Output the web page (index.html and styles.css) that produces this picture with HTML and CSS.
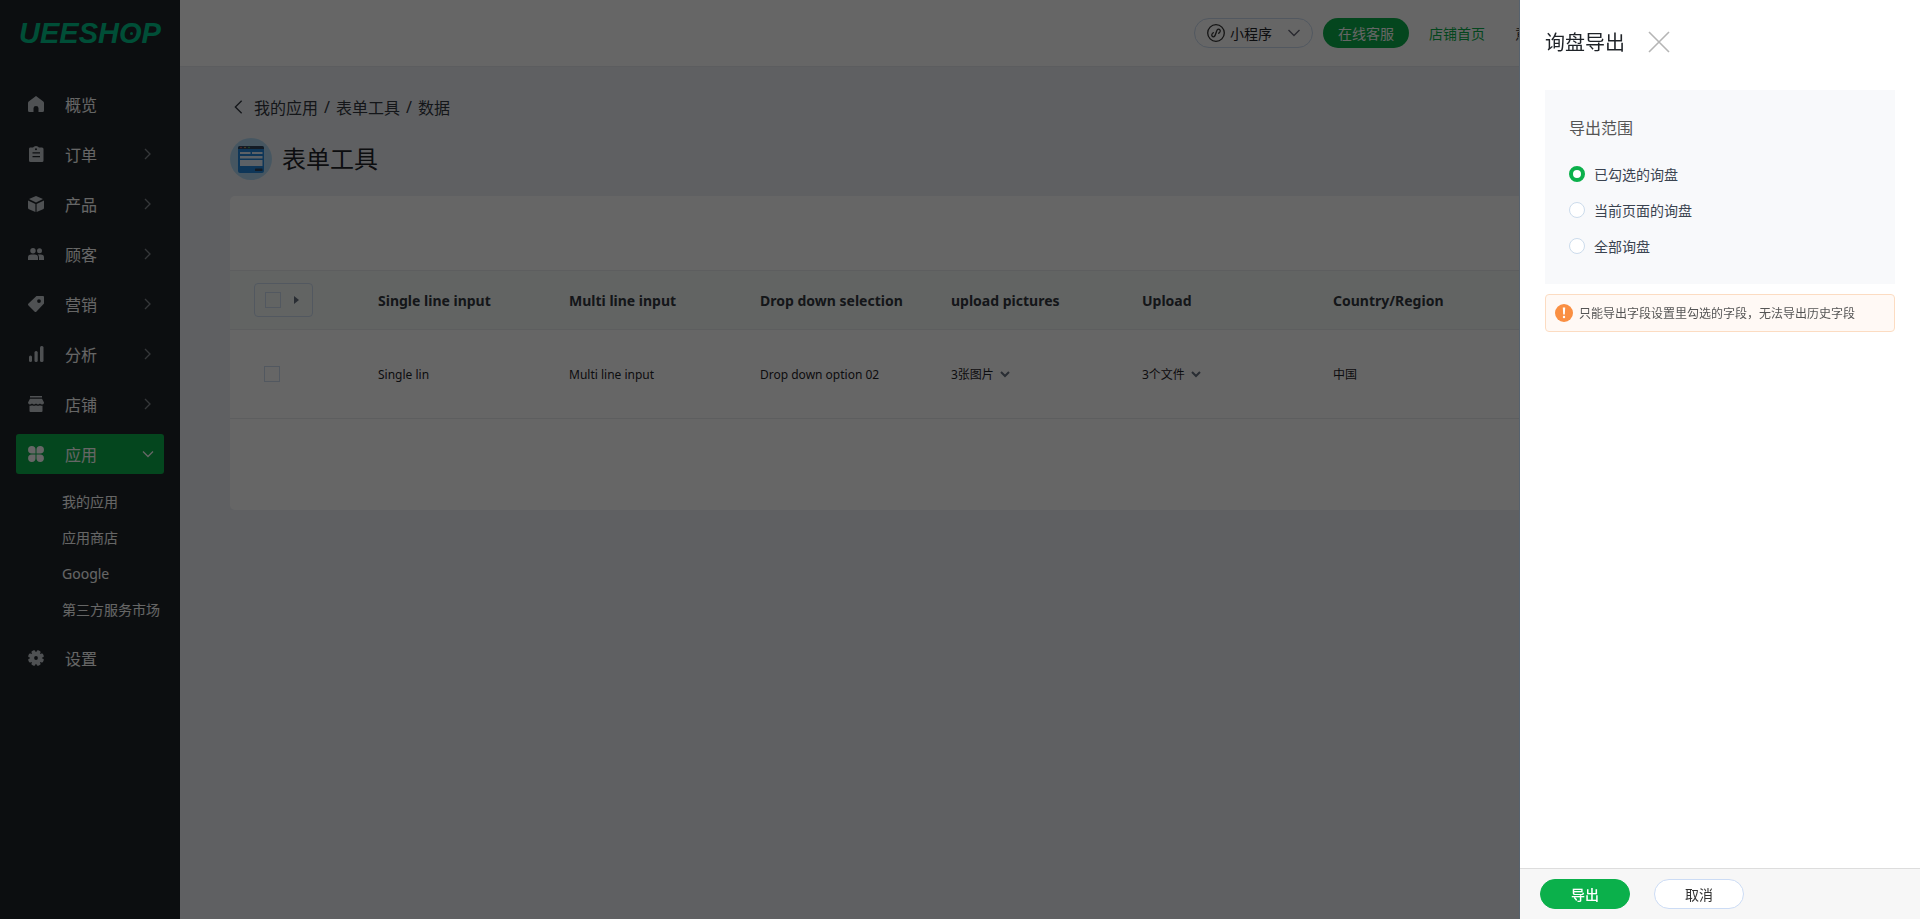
FILE: index.html
```html
<!DOCTYPE html>
<html lang="zh-CN">
<head>
  <meta charset="UTF-8">
  <meta name="viewport" content="width=device-width, initial-scale=1.0">
  <title>表单工具</title>
  <link rel="stylesheet" href="styles.css">
</head>
<body>
  <div class="page">
    <!-- Sidebar -->
    <aside class="sidebar">
      <div class="logo">UEESH<span class="logo-o">O</span>P</div>
      <nav class="menu">
        <a href="#" class="menu-item">
          <svg class="icon" viewBox="0 0 16 16"><path d="M8 0 15 5.2Q16 6 16 7V14.5Q16 16 14.5 16H10.5V12.2Q10.5 10 8 10T5.5 12.2V16H1.500Q0 16 0 14.500V7Q0 6 1 5.200Z"/></svg>
          <span>概览</span>
        </a>
        <a href="#" class="menu-item">
          <svg class="icon" viewBox="0 0 16 16"><path fill-rule="evenodd" d="M2 1.500H5Q6 0 8 0T11 1.500H14Q15.500 1.500 15.500 3V14.500Q15.500 16 14 16H2.500Q1 16 1 14.500V3Q1 1.500 2 1.500ZM8 2.200A1 1 0 1 0 8 4.200 1 1 0 0 0 8 2.200ZM4.500 6.300V7.500H12V6.300ZM4.500 10V11.200H12V10Z"/></svg>
          <span>订单</span>
          <svg class="arrow" viewBox="0 0 12 12"><path d="M3 1 8 6 3 11"/></svg>
        </a>
        <a href="#" class="menu-item">
          <svg class="icon" viewBox="0 0 16 16"><path d="M8 0 15 3 8 6.500 1 3ZM0 4.500 7.400 8V16L1 13.200Q0 12.700 0 11.700ZM16 4.500 8.600 8V16L15 13.200Q16 12.700 16 11.700Z"/></svg>
          <span>产品</span>
          <svg class="arrow" viewBox="0 0 12 12"><path d="M3 1 8 6 3 11"/></svg>
        </a>
        <a href="#" class="menu-item">
          <svg class="icon" viewBox="0 0 16 16"><circle cx="5" cy="4.800" r="2.700"/><circle cx="11.500" cy="4.800" r="2.500"/><path d="M0 14V11.500Q0 8.500 3 8.500H7Q10 8.500 10 11.500V14ZM11 14V11.500Q11 9.600 9.800 8.500H13Q16 8.500 16 11.500V14Z"/></svg>
          <span>顾客</span>
          <svg class="arrow" viewBox="0 0 12 12"><path d="M3 1 8 6 3 11"/></svg>
        </a>
        <a href="#" class="menu-item">
          <svg class="icon" viewBox="0 0 16 16"><path fill-rule="evenodd" d="M8.500 0H15Q16 0 16 1V7.500L8.500 15.500Q7.500 16.500 6.500 15.500L.5 9.500Q-.5 8.500 .5 7.500ZM11 3.200A1.900 1.900 0 1 0 11 7 1.900 1.900 0 0 0 11 3.200Z"/></svg>
          <span>营销</span>
          <svg class="arrow" viewBox="0 0 12 12"><path d="M3 1 8 6 3 11"/></svg>
        </a>
        <a href="#" class="menu-item">
          <svg class="icon" viewBox="0 0 16 16"><rect x="1" y="9.500" width="3" height="6.500" rx="1.500"/><rect x="6.500" y="5" width="3.200" height="11" rx="1.500"/><rect x="12" y="0" width="3.500" height="16" rx="1.500"/></svg>
          <span>分析</span>
          <svg class="arrow" viewBox="0 0 12 12"><path d="M3 1 8 6 3 11"/></svg>
        </a>
        <a href="#" class="menu-item">
          <svg class="icon" viewBox="0 0 16 16"><path d="M2 0H14V1.500H2ZM2 2.800H14L16 6.500Q16 8.500 14.300 8.500T12 7.500Q11 8.500 10 8.500T8 7.500Q7 8.500 6 8.500T4 7.500Q3 8.500 1.700 8.500T0 6.500ZM1.500 9.800Q3 10 4 9.200 6 10.500 8 9.200 10 10.500 12 9.200 13 10 14.500 9.800V15Q14.500 16 13.500 16H2.500Q1.500 16 1.500 15Z"/></svg>
          <span>店铺</span>
          <svg class="arrow" viewBox="0 0 12 12"><path d="M3 1 8 6 3 11"/></svg>
        </a>
        <a href="#" class="menu-item active">
          <svg class="icon" viewBox="0 0 16 16"><path d="M3.800 0A3.700 3.700 0 0 1 7.500 3.700V7.500H3.800A3.700 3.700 0 0 1 3.800 0ZM12.200 0A3.700 3.700 0 0 1 12.200 7.500H8.500V3.700A3.700 3.700 0 0 1 12.200 0ZM3.800 8.500H7.500V12.200A3.700 3.700 0 1 1 3.800 8.500ZM8.500 8.500H12.200A3.700 3.700 0 1 1 8.500 12.200Z"/></svg>
          <span>应用</span>
          <svg class="arrow" viewBox="0 0 12 12"><path d="M1 3.500 6 8.500 11 3.500"/></svg>
        </a>
        <div class="submenu">
          <a href="#">我的应用</a>
          <a href="#">应用商店</a>
          <a href="#">Google</a>
          <a href="#">第三方服务市场</a>
        </div>
        <a href="#" class="menu-item">
          <svg class="icon" viewBox="0 0 16 16">
            <circle cx="8" cy="8" r="6"/>
            <rect x="6" y="0" width="4" height="16" rx="1.200" transform="rotate(22.500 8 8)"/>
            <rect x="6" y="0" width="4" height="16" rx="1.200" transform="rotate(67.500 8 8)"/>
            <rect x="6" y="0" width="4" height="16" rx="1.200" transform="rotate(112.500 8 8)"/>
            <rect x="6" y="0" width="4" height="16" rx="1.200" transform="rotate(157.500 8 8)"/>
            <circle cx="8" cy="8" r="1.900" fill="#20252a"/>
          </svg>
          <span>设置</span>
        </a>
      </nav>
    </aside>

    <div class="main">
      <!-- Top bar -->
      <header class="topbar">
        <div class="channel">
          <svg class="channel-icon" viewBox="0 0 18 18"><circle cx="9" cy="9" r="8.300"/><path d="M7 8.700C4.500 8.700 3.800 12.800 6.500 12.800 9.500 12.800 8.500 5.200 11.500 5.200 14.200 5.200 13.500 9.300 11 9.300"/></svg>
          <select id="channel" aria-label="渠道">
            <option>小程序</option>
          </select>
          <svg class="channel-arrow" viewBox="0 0 12 12"><path d="M.5 3 6 8.500 11.500 3"/></svg>
        </div>
        <button type="button" class="service">在线客服</button>
        <a href="#" class="shop-link">店铺首页</a>
        <a href="#" class="feedback">意见反馈</a>
      </header>

      <main class="content">
        <div class="breadcrumb">
          <svg class="back" viewBox="0 0 10 16"><path d="M8.500 1 1.500 8 8.500 15"/></svg>
          <a href="#">我的应用</a> <span>/</span> <a href="#">表单工具</a> <span>/</span> <span>数据</span>
        </div>
        <div class="title">
          <svg class="app-icon" viewBox="0 0 42 42">
            <circle cx="21" cy="21" r="21" fill="#b0d8f2"/>
            <rect x="8" y="8" width="26" height="27" rx="2" fill="#2388dc"/>
            <path d="M8 11V10Q8 8 10 8H32Q34 8 34 10V11Z" fill="#31455c"/>
            <circle cx="11" cy="9.500" r=".7" fill="#f66"/><circle cx="15" cy="9.500" r=".7" fill="#fc6"/><circle cx="19" cy="9.500" r=".7" fill="#6d6"/>
            <path d="M10 14H20.500V16H10ZM22 14H32.500V16H22ZM10 18H32.500V20.500H10ZM10 22H32.500V28H10Z" fill="#e6f3ff"/>
            <rect x="25" y="30.500" width="7.500" height="2.500" rx=".5" fill="#31455c"/>
          </svg>
          <h1>表单工具</h1>
        </div>

        <!-- Form data -->
        <div class="card">
          <table class="data">
            <colgroup>
              <col class="col-check"><col><col><col><col><col><col><col><col class="col-action">
            </colgroup>
            <thead>
              <tr>
                <th>
                  <div class="check-all">
                    <input type="checkbox" class="check" aria-label="全选">
                    <span class="caret"></span>
                  </div>
                </th>
                <th>Single line input</th>
                <th>Multi line input</th>
                <th>Drop down selection</th>
                <th>upload pictures</th>
                <th>Upload</th>
                <th>Country/Region</th>
                <th></th>
                <th></th>
              </tr>
            </thead>
            <tbody>
              <tr>
                <td class="cell-check"><input type="checkbox" class="check" aria-label="选择"></td>
                <td>Single lin</td>
                <td>Multi line input</td>
                <td>Drop down option 02</td>
                <td><button type="button" class="files">3张图片 <svg viewBox="0 0 10 10"><path d="M1 3 5 7 9 3"/></svg></button></td>
                <td><button type="button" class="files">3个文件 <svg viewBox="0 0 10 10"><path d="M1 3 5 7 9 3"/></svg></button></td>
                <td>中国</td>
                <td></td>
                <td></td>
              </tr>
            </tbody>
          </table>
        </div>
      </main>
    </div>
  </div>

  <div class="mask"></div>

  <!-- Export drawer -->
  <form class="drawer">
    <div class="drawer-head">
      <h2>询盘导出</h2>
      <button type="button" class="close" aria-label="关闭">
        <svg viewBox="0 0 22 22"><path d="M1 1 21 21M21 1 1 21"/></svg>
      </button>
    </div>
    <div class="drawer-body">
      <fieldset class="range">
        <legend>导出范围</legend>
        <label><input type="radio" name="range" value="checked" checked>已勾选的询盘</label>
        <label><input type="radio" name="range" value="current">当前页面的询盘</label>
        <label><input type="radio" name="range" value="all">全部询盘</label>
      </fieldset>
      <div class="tips">
        <svg viewBox="0 0 18 18"><circle cx="9" cy="9" r="9" fill="#fa8f42"/><path d="M7.800 3.500H10.200L9.800 10.500H8.200Z" fill="#fff"/><circle cx="9" cy="13" r="1.200" fill="#fff"/></svg>
        <span>只能导出字段设置里勾选的字段，无法导出历史字段</span>
      </div>
    </div>
    <div class="drawer-foot">
      <button type="submit" class="btn btn-submit">导出</button>
      <button type="button" class="btn">取消</button>
    </div>
  </form>
</body>
</html>
```
FILE: styles.css
```css
* {
  box-sizing: border-box;
}
body {
  margin: 0;
  font-family: "Noto Sans", "Noto Sans CJK SC", sans-serif;
  font-size: 14px;
  color: #1f2328;
  background-color: #eef1f6;
}
a {
  color: inherit;
  text-decoration: none;
}
button, select {
  font-family: inherit;
  cursor: pointer;
}
.page {
  display: flex;
  min-height: 100vh;
}

/* sidebar */
.sidebar {
  flex: none;
  width: 180px;
  background-color: #20252a;
  color: #fff;
}
.logo {
  height: 84px;
  padding: 17px 0 0 19px;
  font: italic bold 29px/32px "Liberation Sans", Arial, sans-serif;
  color: #00c389;
}
.logo-o {
  position: relative;
}
.logo-o::after {
  content: "";
  position: absolute;
  left: 11px;
  top: 15px;
  width: 3px;
  height: 3px;
  border-radius: 50%;
  background-color: #00c389;
}
.menu {
  display: flex;
  flex-direction: column;
  gap: 10px;
  padding: 0 16px;
}
.menu-item {
  display: flex;
  align-items: center;
  height: 40px;
  padding: 0 10px 0 12px;
  border-radius: 3px;
  font-size: 16px;
}
.menu-item span {
  flex: 1;
}
.menu-item.active {
  background-color: #0bb04b;
}
.icon {
  width: 16px;
  height: 16px;
  margin-right: 21px;
  fill: #c5cad0;
}
.active .icon {
  fill: #fff;
}
.arrow {
  width: 12px;
  height: 12px;
  fill: none;
  stroke: #868b90;
  stroke-width: 1.3;
}
.active .arrow {
  stroke: #fff;
}
.submenu {
  display: flex;
  flex-direction: column;
  padding-left: 46px;
}
.submenu a {
  line-height: 36px;
  white-space: nowrap;
}

/* top bar */
.main {
  flex: 1;
  min-width: 0;
}
.topbar {
  display: flex;
  align-items: center;
  justify-content: flex-end;
  height: 67px;
  padding-right: 349px;
  border-bottom: 1px solid #e6e9ee;
  background-color: #fff;
}
.channel {
  display: flex;
  align-items: center;
  width: 119px;
  height: 30px;
  margin-right: 10px;
  padding: 0 12px;
  border: 1px solid #ccdcf0;
  border-radius: 15px;
}
.channel select {
  flex: 1;
  min-width: 0;
  appearance: none;
  padding: 0 0 0 5px;
  border: none;
  background: none;
  font-size: 14px;
  color: #1f2328;
}
.channel svg {
  fill: none;
  stroke: #333;
}
.channel-icon {
  width: 18px;
  height: 18px;
  stroke-width: 1.3;
}
.channel .channel-arrow {
  width: 12px;
  height: 12px;
  stroke: #667;
  stroke-width: 1.4;
}
.service {
  width: 86px;
  height: 30px;
  margin-right: 20px;
  padding: 0;
  border: none;
  border-radius: 15px;
  background-color: #0bb04b;
  color: #fff;
  font-size: 14px;
}
.shop-link {
  margin-right: 30px;
  color: #0bb04b;
}

/* content */
.content {
  padding: 28px 50px;
}
.breadcrumb {
  display: flex;
  align-items: center;
  gap: 6px;
  height: 24px;
  margin-bottom: 19px;
  padding-left: 4px;
  font-size: 16px;
  color: #333840;
}
.back {
  width: 9px;
  height: 16px;
  margin-right: 5px;
  fill: none;
  stroke: #333840;
  stroke-width: 1.5;
}
.title {
  display: flex;
  align-items: center;
  gap: 10px;
  height: 42px;
  margin-bottom: 16px;
}
.app-icon {
  width: 42px;
  height: 42px;
}
.title h1 {
  margin: 0;
  padding-bottom: 4px;
  font-size: 24px;
  font-weight: 400;
}
.card {
  padding: 74px 0 91px;
  border-radius: 5px;
  background-color: #fff;
}
.data {
  width: 100%;
  table-layout: fixed;
  border-collapse: collapse;
}
.col-check {
  width: 138px;
}
.col-action {
  width: 165px;
}
.data th, .data td {
  padding: 0 10px;
  border-bottom: 1px solid #e8ecee;
  text-align: left;
  white-space: nowrap;
}
.data th {
  height: 59px;
  border-top: 1px solid #e8ecee;
  background-color: #f5faf8;
  font-size: 14px;
  color: #333840;
}
.data td {
  height: 89px;
  font-size: 12px;
}
.data th:first-child {
  padding-left: 24px;
}
.data .cell-check {
  padding-left: 34px;
}
.check-all {
  display: flex;
  align-items: center;
  gap: 13px;
  width: 59px;
  height: 34px;
  padding-left: 10px;
  border: 1px solid #ccdcf0;
  border-radius: 4px;
}
.check {
  display: block;
  appearance: none;
  width: 16px;
  height: 16px;
  margin: 0;
  border: 1px solid #ccdcf0;
}
.caret {
  border: 4px solid transparent;
  border-left: 5px solid #667080;
  border-right: none;
}
.files {
  display: flex;
  align-items: center;
  gap: 6px;
  padding: 0;
  border: none;
  background: none;
  font-size: 12px;
  color: inherit;
}
.files svg {
  width: 10px;
  height: 10px;
  fill: none;
  stroke: #667080;
  stroke-width: 2;
}

/* drawer */
.mask {
  position: fixed;
  inset: 0;
  background-color: rgba(0, 0, 0, 0.6);
}
.drawer {
  position: fixed;
  top: 0;
  right: 0;
  bottom: 0;
  display: flex;
  flex-direction: column;
  width: 400px;
  background-color: #fff;
  box-shadow: -1px 0 0 #56626e;
}
.drawer-head {
  display: flex;
  align-items: center;
  gap: 23px;
  height: 84px;
  padding: 0 25px;
}
.drawer-head h2 {
  margin: 0;
  padding-bottom: 2px;
  font-size: 20px;
  font-weight: 400;
}
.close {
  padding: 0;
  border: none;
  background: none;
}
.close svg {
  display: block;
  width: 22px;
  height: 22px;
  fill: none;
  stroke: #b5b5b5;
  stroke-width: 1.6;
}
.drawer-body {
  flex: 1;
  padding: 6px 25px;
}
.range {
  margin: 0 0 10px;
  padding: 24px 24px 20px;
  border: none;
  background-color: #f8f9fb;
}
.range legend {
  float: left;
  width: 100%;
  margin-bottom: 14px;
  padding: 0;
  font-size: 16px;
  line-height: 28px;
  color: #555;
}
.range label {
  display: flex;
  align-items: center;
  gap: 9px;
  clear: both;
  height: 36px;
  color: #3a4350;
}
.range input {
  appearance: none;
  width: 16px;
  height: 16px;
  margin: 0;
  border: 1px solid #ccdcec;
  border-radius: 50%;
  background-color: #fff;
}
.range input:checked {
  border: 4px solid #0bb04b;
}
.tips {
  display: flex;
  align-items: center;
  gap: 6px;
  height: 38px;
  padding: 0 9px;
  border: 1px solid #fcdcc2;
  border-radius: 4px;
  background-color: #fff9f5;
  font-size: 12px;
  color: #555;
}
.tips svg {
  width: 18px;
  height: 18px;
}
.drawer-foot {
  display: flex;
  align-items: center;
  gap: 24px;
  height: 51px;
  padding: 0 20px;
  border-top: 1px solid #ddd;
  background-color: #f7f7f7;
}
.btn {
  width: 90px;
  height: 30px;
  padding: 0;
  border: 1px solid #ccdcf5;
  border-radius: 15px;
  background-color: #fff;
  font-size: 14px;
  color: #333;
}
.btn-submit {
  border-color: #0bb04b;
  background-color: #0bb04b;
  color: #fff;
  font-weight: 500;
}
```
